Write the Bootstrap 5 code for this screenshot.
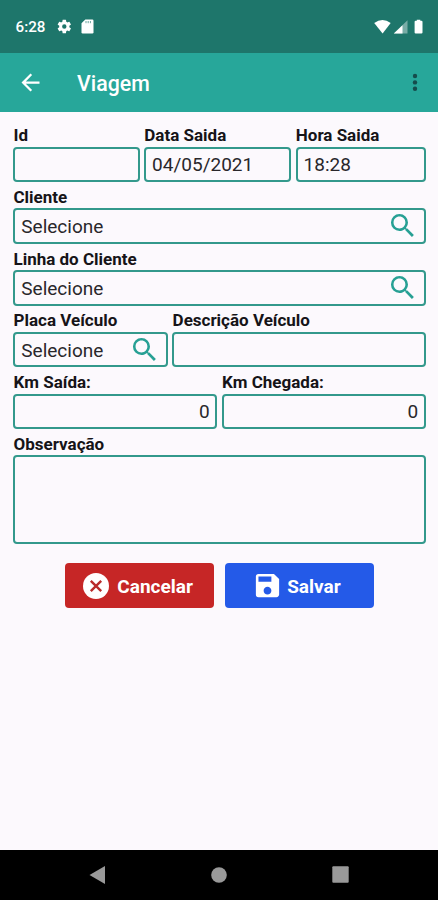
<!DOCTYPE html>
<html lang="pt-BR">
<head>
<meta charset="utf-8">
<meta name="viewport" content="width=device-width, initial-scale=1">
<title>Viagem</title>
<link href="https://cdn.jsdelivr.net/npm/bootstrap@5.3.0/dist/css/bootstrap.min.css" rel="stylesheet">
<style>
  body { font-family: Roboto, "Noto Sans", sans-serif; background: #fcf9fd; color: #111; height: 900px; overflow: hidden; }
  svg { display: block; flex: none; }
  .status-bar { height: 53px; background: #1e766b; font-size: 15.2px; font-weight: 500; padding: 2px 13px 0 15.5px; }
  .status-icon { margin-top: -1px; }
  .app-bar { height: 58.5px; background: #27a79a; padding: 0 7px 0 17px; }
  .app-title { font-size: 21.3px; font-weight: 500; margin-left: 33px; line-height: 1; padding-top: 3px; }
  .trip-form { padding: 8.9px 12.3px 0 13.3px; }
  .form-line { display: grid; column-gap: 4.5px; }
  .line-times { grid-template-columns: 126.3px 147px 1fr; }
  .line-vehicle { grid-template-columns: 154.6px 1fr; }
  .line-km { grid-template-columns: 204px 1fr; }
  .form-label { font-size: 17px; font-weight: 700; line-height: 20px; height: 26.2px; padding: 4.8px 0 0 .2px; white-space: nowrap; color: #161418; }
  .form-control { height: 35.55px; border: 2px solid #33998c; border-radius: 4px; background: transparent; font-size: 19px; line-height: 1; padding: 1px 5.5px 0 6px; color: #29272b; }
  .lookup svg { margin-top: -1.5px; }
  .notes { height: 89px; }
  .actions { margin-top: 19px; gap: 10.5px; }
  .actions .btn { width: 149.3px; height: 45px; border-radius: 4px; border: 0; font-size: 19px; font-weight: 700; color: #fff; padding: 0 3px 0 0; }
  .actions .btn span { padding-top: 2px; }
  .btn-cancel, .btn-cancel:hover { background: #c62626; }
  .btn-save, .btn-save:hover { background: #245ae8; }
  .actions .btn-save { padding-right: 6px; }
  .nav-keys { height: 50.5px; background: #000; padding: 0 89px 0 88.5px; }
</style>
<script src="https://cdn.jsdelivr.net/npm/bootstrap@5.3.0/dist/js/bootstrap.bundle.min.js"></script>
</head>
<body class="d-flex flex-column">
<svg width="0" height="0" class="d-none">
  <symbol id="search" viewBox="0 0 24 24"><path fill="#27a094" d="M15.5 14h-.79l-.28-.27A6.471 6.471 0 0 0 16 9.5 6.5 6.5 0 1 0 9.500 16c1.610 0 3.090-.59 4.230-1.570l.27.28v.79l5 4.990L20.490 19l-4.990-5zm-6 0C7.010 14 5 11.990 5 9.500S7.010 5 9.500 5 14 7.010 14 9.500 11.990 14 9.500 14z"/></symbol>
</svg>

<header>
  <div class="status-bar d-flex align-items-center justify-content-between text-white">
    <div class="d-flex align-items-center">
      <span>6:28</span>
      <svg class="status-icon ms-2" width="24" height="17" viewBox="0 0 34 24"><path fill="#fff" transform="translate(4 0)" d="M19.140 12.940c.04-.3.06-.61.06-.94 0-.32-.02-.64-.07-.94l2.030-1.580a.49.49 0 0 0 .12-.61l-1.920-3.320a.488.488 0 0 0-.59-.22l-2.390.96c-.5-.38-1.030-.7-1.620-.94l-.36-2.540a.484.484 0 0 0-.48-.41h-3.840c-.24 0-.43.17-.47.41l-.36 2.540c-.59.24-1.130.57-1.620.94l-2.390-.96c-.22-.08-.47 0-.59.22L2.740 8.870c-.12.21-.08.47.12.61l2.030 1.580c-.05.3-.09.63-.09.94s.02.64.07.94l-2.030 1.580a.49.49 0 0 0-.12.61l1.920 3.320c.12.22.37.29.59.22l2.390-.96c.5.38 1.030.7 1.620.94l.36 2.540c.05.24.24.41.48.41h3.840c.24 0 .44-.17.47-.41l.36-2.540c.59-.24 1.130-.56 1.620-.94l2.390.96c.22.08.47 0 .59-.22l1.920-3.320c.12-.22.07-.47-.12-.61l-2.010-1.580zM12 15.100a3.100 3.100 0 1 1 0-6.200 3.100 3.100 0 0 1 0 6.200z"/></svg>
      <svg class="status-icon ms-1" width="13" height="15" viewBox="0 0 13 15"><path fill="#fff" d="M4.300.5h7q1.200 0 1.200 1.200v11.600q0 1.200-1.200 1.200H1.700q-1.200 0-1.200-1.200V4.300z"/><path stroke="#1e766b" stroke-width="1" d="M5 2v2.200M7.200 2v2.200M9.400 2v2.200" opacity=".65"/></svg>
    </div>
    <svg class="status-icon" width="52" height="16" viewBox="0 0 52 16"><path fill="#fff" d="M1.200 4.100Q9.500-2 17.700 4.100L9.600 14.500z"/><path fill="#fff" opacity=".4" d="M34.500 1.300v13.200H20.800z"/><path fill="#fff" d="M29.500 6.200v8.300h-8.700z"/><path fill="#fff" d="M42.700 1.700h1.100V.7h3.500v1h1.100q1.100 0 1.100 1.100v10.700q0 1.100-1.100 1.100h-5.700q-1.100 0-1.100-1.100V2.800q0-1.100 1.100-1.100z"/></svg>
  </div>
  <nav class="app-bar d-flex align-items-center text-white">
    <svg width="27" height="27" viewBox="0 0 24 24"><path fill="#fff" d="M20 11H7.830l5.590-5.590L12 4l-8 8 8 8 1.410-1.410L7.830 13H20z"/></svg>
    <span class="app-title">Viagem</span>
    <svg class="ms-auto" width="32" height="24" viewBox="0 0 32 24" fill="#154c4c"><circle cx="16" cy="6" r="2.200"/><circle cx="16" cy="12.400" r="2.200"/><circle cx="16" cy="18.800" r="2.200"/></svg>
  </nav>
</header>

<main class="trip-form flex-grow-1">
  <div class="form-line line-times">
    <div><div class="form-label mb-0">Id</div><div class="form-control"></div></div>
    <div><div class="form-label mb-0">Data Saida</div><div class="form-control d-flex align-items-center">04/05/2021</div></div>
    <div><div class="form-label mb-0">Hora Saida</div><div class="form-control d-flex align-items-center">18:28</div></div>
  </div>
  <div class="form-label mb-0">Cliente</div>
  <div class="form-control lookup d-flex align-items-center justify-content-between">Selecione<svg width="31.500" height="31.500"><use href="#search"/></svg></div>
  <div class="form-label mb-0">Linha do Cliente</div>
  <div class="form-control lookup d-flex align-items-center justify-content-between">Selecione<svg width="31.500" height="31.500"><use href="#search"/></svg></div>
  <div class="form-line line-vehicle">
    <div><div class="form-label mb-0">Placa Veículo</div><div class="form-control lookup d-flex align-items-center justify-content-between">Selecione<svg width="31.500" height="31.500"><use href="#search"/></svg></div></div>
    <div><div class="form-label mb-0">Descrição Veículo</div><div class="form-control"></div></div>
  </div>
  <div class="form-line line-km">
    <div><div class="form-label mb-0">Km Saída:</div><div class="form-control d-flex align-items-center justify-content-end">0</div></div>
    <div><div class="form-label mb-0">Km Chegada:</div><div class="form-control d-flex align-items-center justify-content-end">0</div></div>
  </div>
  <div class="form-label mb-0">Observação</div>
  <div class="form-control notes"></div>
  <div class="actions d-flex justify-content-center">
    <button type="button" class="btn btn-cancel d-flex align-items-center justify-content-center"><svg class="me-2" width="26" height="26" viewBox="0 0 26 26"><circle cx="13" cy="13" r="13" fill="#fff"/><path d="M7.800 7.800l10.400 10.400M18.200 7.800L7.800 18.200" stroke="#b92b2b" stroke-width="2.400"/></svg><span>Cancelar</span></button>
    <button type="button" class="btn btn-save d-flex align-items-center justify-content-center"><svg class="me-1" width="31" height="31" viewBox="0 0 24 24"><path fill="#fff" d="M17 3H5a2 2 0 0 0-2 2v14a2 2 0 0 0 2 2h14c1.100 0 2-.9 2-2V7zm-5 16c-1.660 0-3-1.340-3-3s1.340-3 3-3 3 1.340 3 3-1.340 3-3 3zm3-10H5V5h10z"/></svg><span>Salvar</span></button>
  </div>
</main>

<footer class="nav-keys d-flex align-items-center justify-content-between">
  <svg width="17" height="20" viewBox="0 0 17 20"><path fill="#999" d="M.5 10L16 1v18z"/></svg>
  <svg width="16" height="16" viewBox="0 0 16 16"><circle cx="8" cy="8" r="7.800" fill="#999"/></svg>
  <svg width="17" height="17" viewBox="0 0 17 17"><rect x=".3" y=".3" width="16.400" height="16.400" rx="1" fill="#999"/></svg>
</footer>
</body>
</html>
